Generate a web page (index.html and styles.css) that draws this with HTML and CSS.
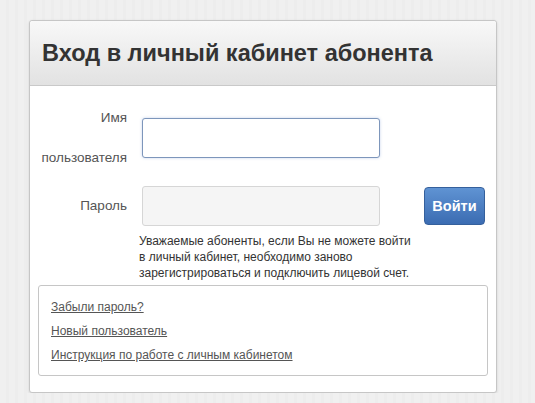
FILE: index.html
```html
<!DOCTYPE html>
<html lang="ru">
<head>
    <meta charset="UTF-8">
    <meta name="viewport" content="width=device-width, initial-scale=1.0">
    <title>Вход в личный кабинет абонента</title>
    <link rel="stylesheet" href="styles.css">
</head>
<body>
    <div class="panel">
        <div class="panel-header">
            <h1>Вход в личный кабинет абонента</h1>
        </div>
        <form class="login">
            <label class="field-label first" for="login">Имя пользователя</label>
            <input class="field focused" type="text" id="login">
            <span></span>

            <label class="field-label second" for="password">Пароль</label>
            <input class="field" type="password" id="password">
            <button type="button" class="btn">Войти</button>

            <span></span>
            <p class="hint">Уважаемые абоненты, если Вы не можете войти<br>в личный кабинет, необходимо заново<br>зарегистрироваться и подключить лицевой счет.</p>
        </form>
        <div class="links">
            <a href="#">Забыли пароль?</a>
            <a href="#">Новый пользователь</a>
            <a href="#">Инструкция по работе с личным кабинетом</a>
        </div>
    </div>
</body>
</html>
```

FILE: styles.css
```css
body {
    margin: 0;
    font-family: "Liberation Sans", Arial, sans-serif;
    background-color: #efefef;
    background-image: repeating-linear-gradient(90deg, #f0f0f0 0, #f0f0f0 6px, #ededed 6px, #ededed 9px);
}
.panel {
    margin: 20px 0 0 29px;
    width: 466px;
    background: #fff;
    border: 1px solid #c6c6c6;
    border-radius: 3px;
    box-shadow: 0 1px 3px rgba(0, 0, 0, 0.12);
    padding-bottom: 16px;
}
.panel-header {
    height: 64px;
    padding-left: 12px;
    border-bottom: 1px solid #c9c9c9;
    border-radius: 3px 3px 0 0;
    background: linear-gradient(#f8f8f8, #e2e2e2);
    display: flex;
    align-items: center;
}
.panel-header h1 {
    margin: 0;
    font-size: 23.5px;
    font-weight: bold;
    color: #333;
}
.login {
    display: grid;
    grid-template-columns: 97px 238px 61px;
    column-gap: 15px;
    padding-top: 12px;
}
.login .btn {
    margin-left: 29px;
}
.field-label {
    text-align: right;
    font-size: 13.5px;
    line-height: 40px;
    color: #555;
}
.field-label.first {
    padding-left: 6px;
}
.field-label.second {
    margin-top: 8px;
}
.field {
    box-sizing: border-box;
    height: 40px;
    border: 1px solid #d6d6d6;
    border-radius: 3px;
    background: #f5f5f5;
    font: inherit;
    margin-top: 8px;
}
.field.focused {
    margin-top: 20px;
    background: #fff;
    border-color: #7d96bb;
    box-shadow: 0 0 3px rgba(90, 130, 200, 0.35);
}
.btn {
    align-self: start;
    margin-top: 9px;
    width: 61px;
    height: 38px;
    border: 1px solid #35609c;
    border-radius: 4px;
    background: linear-gradient(#5f93d3, #3b6cb2);
    color: #fff;
    font-family: inherit;
    font-size: 14.5px;
    font-weight: bold;
    cursor: pointer;
}
.hint {
    grid-column: 2 / 4;
    margin: 7px 0 0 -3px;
    font-size: 12px;
    line-height: 16px;
    color: #333;
}
.links {
    margin: 4px 8px 0 8px;
    padding: 9px 12px 8px;
    border: 1px solid #c6c6c6;
    border-radius: 3px;
}
.links a {
    display: block;
    font-size: 12px;
    line-height: 24px;
    color: #555;
}
```
